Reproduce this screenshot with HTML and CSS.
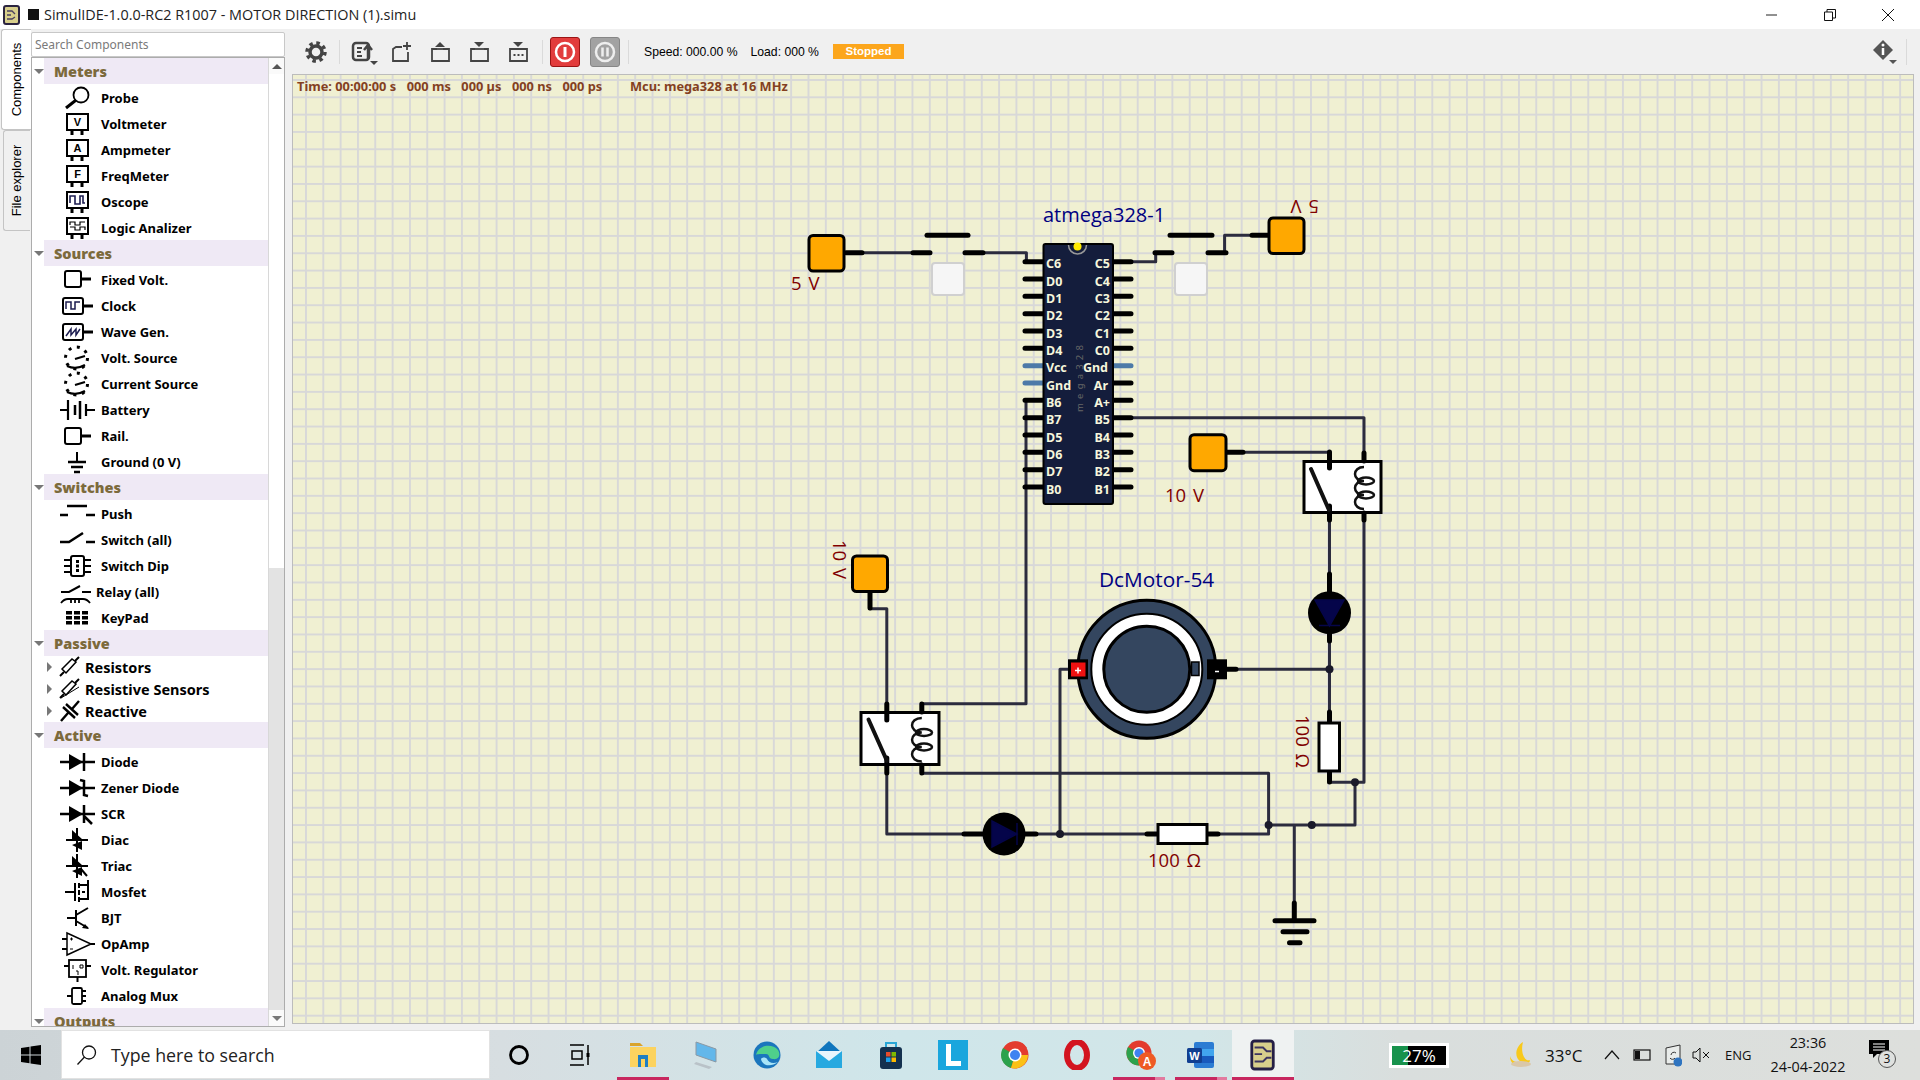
FILE: index.html
```html
<!DOCTYPE html>
<html lang="en">
<head>
    <meta charset="UTF-8">
    <title>SimulIDE-1.0.0-RC2 R1007 - MOTOR DIRECTION (1).simu</title>
    <link rel="stylesheet" href="styles.css">
</head>
<body>
    <div class="titlebar">
        <svg class="app-icon" viewBox="0 0 18 20"><rect x="1" y="1" width="15" height="18" rx="2" fill="#d8cf8c" stroke="#2b2440" stroke-width="2"/><path d="M4 6h5l3 3M4 10h4M4 14h5l3-2" fill="none" stroke="#4a4060" stroke-width="1.3"/></svg>
        <span class="title-mark"></span>
        <span class="title-text">SimulIDE-1.0.0-RC2 R1007 - MOTOR DIRECTION (1).simu</span>
        <div class="win-buttons">
            <svg viewBox="0 0 12 12"><path d="M0 6h11" stroke="#222"/></svg>
            <svg viewBox="0 0 12 12"><path d="M.5 3h8v8.500h-8zM3 3V.5h8.500V9H9" fill="none" stroke="#111"/></svg>
            <svg viewBox="0 0 12 12"><path d="M0 0l12 12M12 0L0 12" stroke="#111"/></svg>
        </div>
    </div>

    <div class="main">
        <div class="tabs">
            <div class="tab tab-active"><span>Components</span></div>
            <div class="tab"><span>File explorer</span></div>
        </div>

        <div class="side">
            <input class="search" type="text" placeholder="Search Components">
            <div class="tree">
                <div class="list">
                    <div class="group"><i class="tri-down"></i><b>Meters</b></div>
                    <div class="item"><svg class="ico" viewBox="0 0 36 26"><circle cx="21" cy="10" r="7.500" fill="none" stroke="#000" stroke-width="1.800"/><path d="M15.500 15.500L6 23" stroke="#000" stroke-width="3"/></svg>Probe</div>
                    <div class="item"><svg class="ico" viewBox="0 0 36 26"><rect x="7" y="3" width="21" height="16" fill="#fff" stroke="#000" stroke-width="2"/><path d="M12 19v5M22 19v5" stroke="#000" stroke-width="3"/><text x="17.500" y="15" class="ico-letter">V</text></svg>Voltmeter</div>
                    <div class="item"><svg class="ico" viewBox="0 0 36 26"><rect x="7" y="3" width="21" height="16" fill="#fff" stroke="#000" stroke-width="2"/><path d="M12 19v5M22 19v5" stroke="#000" stroke-width="3"/><text x="17.500" y="15" class="ico-letter">A</text></svg>Ampmeter</div>
                    <div class="item"><svg class="ico" viewBox="0 0 36 26"><rect x="7" y="3" width="21" height="16" fill="#fff" stroke="#000" stroke-width="2"/><path d="M12 19v5M22 19v5" stroke="#000" stroke-width="3"/><text x="17.500" y="15" class="ico-letter">F</text></svg>FreqMeter</div>
                    <div class="item"><svg class="ico" viewBox="0 0 36 26"><rect x="7" y="3" width="21" height="16" fill="#fff" stroke="#000" stroke-width="2"/><path d="M12 19v5M22 19v5" stroke="#000" stroke-width="3"/><path d="M10 14V7h5v8h5V7h3v7h2" fill="none" stroke="#1c1c50" stroke-width="1.600"/></svg>Oscope</div>
                    <div class="item"><svg class="ico" viewBox="0 0 36 26"><rect x="7" y="3" width="21" height="16" fill="#fff" stroke="#000" stroke-width="2"/><path d="M12 19v5M22 19v5" stroke="#000" stroke-width="3"/><path d="M10 10V7h5v3h5V7h5M10 12h5v3h5v-3h5v3" fill="none" stroke="#000" stroke-width="1.200"/></svg>Logic Analizer</div>

                    <div class="group"><i class="tri-down"></i><b>Sources</b></div>
                    <div class="item"><svg class="ico" viewBox="0 0 36 26"><rect x="5" y="4" width="16" height="16" rx="2" fill="#fff" stroke="#000" stroke-width="2"/><path d="M21 12h10" stroke="#000" stroke-width="3"/></svg>Fixed Volt.</div>
                    <div class="item"><svg class="ico" viewBox="0 0 36 26"><rect x="3" y="5" width="20" height="16" rx="2" fill="#fff" stroke="#000" stroke-width="2"/><path d="M23 13h10" stroke="#000" stroke-width="3"/><path d="M6 16V9h5v7h4V9h5" fill="none" stroke="#1c1c50" stroke-width="1.500"/></svg>Clock</div>
                    <div class="item"><svg class="ico" viewBox="0 0 36 26"><rect x="3" y="5" width="20" height="16" rx="2" fill="#fff" stroke="#000" stroke-width="2"/><path d="M23 13h10" stroke="#000" stroke-width="3"/><path d="M6 17l5-7v6l5-6v6l4-6" fill="none" stroke="#1c1c50" stroke-width="1.500"/></svg>Wave Gen.</div>
                    <div class="item"><svg class="ico" viewBox="0 0 36 26"><circle cx="16.500" cy="13" r="11" fill="none" stroke="#000" stroke-width="3" stroke-dasharray="3 5.640"/><path d="M7 21q9 4 18-1M15 14l10-3" fill="none" stroke="#000" stroke-width="2.200"/></svg>Volt. Source</div>
                    <div class="item"><svg class="ico" viewBox="0 0 36 26"><circle cx="16.500" cy="13" r="11" fill="none" stroke="#000" stroke-width="3" stroke-dasharray="3 5.640"/><path d="M7 21q9 4 18-1M15 14l10-3" fill="none" stroke="#000" stroke-width="2.200"/></svg>Current Source</div>
                    <div class="item"><svg class="ico" viewBox="0 0 36 26"><path d="M0 13h8M8 3v20M26 13h9M26 7v12" stroke="#000" stroke-width="2.200" fill="none"/><path d="M15 8v10M20 4v18" stroke="#000" stroke-width="2.500"/></svg>Battery</div>
                    <div class="item"><svg class="ico" viewBox="0 0 36 26"><rect x="5" y="5" width="16" height="16" rx="2" fill="#fff" stroke="#000" stroke-width="2"/><path d="M21 13h10" stroke="#000" stroke-width="3"/></svg>Rail.</div>
                    <div class="item"><svg class="ico" viewBox="0 0 36 26"><path d="M17 3v10" stroke="#000" stroke-width="2"/><path d="M8 13h18M11 18h12M14 23h6" stroke="#000" stroke-width="2.600"/></svg>Ground (0 V)</div>

                    <div class="group"><i class="tri-down"></i><b>Switches</b></div>
                    <div class="item"><svg class="ico" viewBox="0 0 36 26"><path d="M7 5h20" stroke="#000" stroke-width="2.500"/><path d="M0 14h8M26 14h9" stroke="#000" stroke-width="2.500"/></svg>Push</div>
                    <div class="item"><svg class="ico" viewBox="0 0 36 26"><path d="M0 15h9L23 6" fill="none" stroke="#000" stroke-width="2.500"/><path d="M26 15h9" stroke="#000" stroke-width="2.500"/></svg>Switch (all)</div>
                    <div class="item"><svg class="ico" viewBox="0 0 36 26"><rect x="11" y="3" width="13" height="20" rx="2" fill="#fff" stroke="#000" stroke-width="2"/><path d="M4 7h7M4 13h7M4 19h7M24 7h7M24 13h7M24 19h7" stroke="#000" stroke-width="2"/><path d="M17.500 7v12" stroke="#000" stroke-width="3" stroke-dasharray="3 1.500"/></svg>Switch Dip</div>
                    <div class="item item-relay"><svg class="ico" viewBox="0 0 31 26"><path d="M1 13h8L20 7M22 13h9" fill="none" stroke="#000" stroke-width="2"/><path d="M1 24q3-4 7-4h15q4 0 7 4M11 20v4M15 20v4M19 20v4" fill="none" stroke="#000" stroke-width="1.800"/></svg>Relay (all)</div>
                    <div class="item"><svg class="ico" viewBox="0 0 36 26"><path d="M6 6h6v3.500H6zM14 6h6v3.500h-6zM22 6h6v3.500h-6zM6 11h6v3.500H6zM14 11h6v3.500h-6zM22 11h6v3.500h-6zM6 16h6v3.500H6zM14 16h6v3.500h-6zM22 16h6v3.500h-6z"/></svg>KeyPad</div>

                    <div class="group"><i class="tri-down"></i><b>Passive</b></div>
                    <div class="sub"><i class="tri-right"></i><svg class="ico-sub" viewBox="0 0 21 22"><path d="M1 20l4-4M16 5l4-4" stroke="#000" stroke-width="2"/><path d="M3 13L13 3l4 3L7 17z" fill="#fff" stroke="#000" stroke-width="1.500"/></svg>Resistors</div>
                    <div class="sub"><i class="tri-right"></i><svg class="ico-sub" viewBox="0 0 21 22"><path d="M1 20l4-4M16 5l4-4" stroke="#000" stroke-width="2"/><path d="M3 13L13 3l4 3L7 17z" fill="#fff" stroke="#000" stroke-width="1.500"/><path d="M2 20L20 9" stroke="#000"/></svg>Resistive Sensors</div>
                    <div class="sub"><i class="tri-right"></i><svg class="ico-sub" viewBox="0 0 21 22"><path d="M2 21l7-8M13 9l7-8M4 7l12 11M7 4l12 11" stroke="#000" stroke-width="2.400"/></svg>Reactive</div>

                    <div class="group"><i class="tri-down"></i><b>Active</b></div>
                    <div class="item"><svg class="ico" viewBox="0 0 36 26"><path d="M0 13h35" stroke="#000" stroke-width="2.500"/><path d="M9 5l14 8-14 8z"/><path d="M24 4v18" stroke="#000" stroke-width="2.500"/></svg>Diode</div>
                    <div class="item"><svg class="ico" viewBox="0 0 36 26"><path d="M0 13h35" stroke="#000" stroke-width="2.500"/><path d="M9 5l14 8-14 8z"/><path d="M20 5l4 1v14l4 1" fill="none" stroke="#000" stroke-width="2.500"/></svg>Zener Diode</div>
                    <div class="item"><svg class="ico" viewBox="0 0 36 26"><path d="M0 13h35" stroke="#000" stroke-width="2.500"/><path d="M9 5l14 8-14 8z"/><path d="M24 4v18M24 15l8 8" fill="none" stroke="#000" stroke-width="2.500"/></svg>SCR</div>
                    <div class="item"><svg class="ico" viewBox="0 0 36 26"><path d="M6 13h22M17 1v24" stroke="#000" stroke-width="2"/><path d="M12 3l10 9H12zM22 14v9l-10-5z"/></svg>Diac</div>
                    <div class="item"><svg class="ico" viewBox="0 0 36 26"><path d="M6 13h22M17 1v24M21 16l6 7" stroke="#000" stroke-width="2"/><path d="M12 3l10 9H12zM22 14v9l-10-5z"/></svg>Triac</div>
                    <div class="item"><svg class="ico" viewBox="0 0 36 26"><path d="M5 13h10M15 4v18M19 4v5M19 11v5M19 18v5M19 6h9v14h-9" fill="none" stroke="#000" stroke-width="2"/><path d="M28 1v4M22 13h3" stroke="#000" stroke-width="2"/></svg>Mosfet</div>
                    <div class="item"><svg class="ico" viewBox="0 0 36 26"><path d="M7 13h9M16 5v16M16 10l12-7M16 16l12 7" fill="none" stroke="#000" stroke-width="2"/><path d="M29 24l-7-1 3-4z"/></svg>BJT</div>
                    <div class="item"><svg class="ico" viewBox="0 0 36 26"><path d="M7 2l24 11L7 24z" fill="#fff" stroke="#000" stroke-width="1.500"/><path d="M2 8h5M2 18h5M31 13h4" stroke="#000" stroke-width="1.800"/><path d="M10 8h3M11.500 6.500v3M10 18h3" stroke="#000"/></svg>OpAmp</div>
                    <div class="item"><svg class="ico" viewBox="0 0 36 26"><rect x="9" y="3" width="17" height="17" fill="#fff" stroke="#000" stroke-width="1.800"/><path d="M4 9h5M26 9h5M17.500 20v5" stroke="#000" stroke-width="2"/><path d="M13 8v4M20 8h3v3h-3zM16 14h2v4" stroke="#000" fill="none"/></svg>Volt. Regulator</div>
                    <div class="item"><svg class="ico" viewBox="0 0 36 26"><rect x="12" y="5" width="10" height="16" rx="1.500" fill="#fff" stroke="#000" stroke-width="1.800"/><path d="M7 13h5M22 8h4M22 13h4M22 18h4" stroke="#000" stroke-width="2"/></svg>Analog Mux</div>

                    <div class="group"><i class="tri-down"></i><b>Outputs</b></div>
                </div>
                <div class="scrollbar">
                    <div class="scroll-btn"><i class="tri-up"></i></div>
                    <div class="scroll-thumb"></div>
                    <div class="scroll-track"></div>
                    <div class="scroll-btn"><i class="tri-down"></i></div>
                </div>
            </div>
        </div>

        <div class="work">
            <div class="toolbar">
                <div class="tool"><svg viewBox="0 0 24 24" width="24" height="24"><circle cx="12" cy="12" r="6" fill="none" stroke="#444" stroke-width="3.500"/><circle cx="12" cy="12" r="9" fill="none" stroke="#444" stroke-width="3.500" stroke-dasharray="3.500 3.570"/></svg></div>
                <div class="tool-sep sep-a"></div>
                <div class="tool"><svg viewBox="0 0 38 30" width="38" height="30"><rect x="10" y="6" width="16" height="17" rx="3" fill="none" stroke="#444" stroke-width="2.500"/><path d="M14 11h5M14 15h4M14 19h5" stroke="#444" stroke-width="2"/><path d="M25 22v-12M21 13l4-5 4 5" fill="none" stroke="#444" stroke-width="2.500"/><path d="M27 24h8l-4 4z" fill="#444"/></svg></div>
                <div class="tool"><svg viewBox="0 0 24 24" width="24" height="24"><path d="M13 7H7L4 9v12h15v-9" fill="none" stroke="#444" stroke-width="1.800"/><path d="M18 2v8M14 6h8" stroke="#444" stroke-width="1.800"/></svg></div>
                <div class="tool"><svg viewBox="0 0 24 24" width="24" height="24"><path d="M9 9H4v12h17V9h-6" fill="none" stroke="#444" stroke-width="1.800"/><path d="M12 2l5 5H7z" fill="#444"/><path d="M9 9h6" stroke="#444" stroke-width="1.800"/></svg></div>
                <div class="tool"><svg viewBox="0 0 24 24" width="24" height="24"><path d="M8 9H4v12h17V9h-4" fill="none" stroke="#444" stroke-width="1.800"/><path d="M7 2h10l-5 5z" fill="#444"/><path d="M8 9h9" stroke="#444" stroke-width="1.800"/></svg></div>
                <div class="tool"><svg viewBox="0 0 24 24" width="24" height="24"><path d="M8 9H4v12h17V9h-4" fill="none" stroke="#444" stroke-width="1.800"/><path d="M7 2h10l-5 5z" fill="#444"/><path d="M8 9h9M7.500 15h2M11.500 15h2M15.500 15h2" stroke="#444" stroke-width="1.800"/></svg></div>
                <div class="tool-sep sep-b"></div>
                <div class="sim-btn sim-power"><svg viewBox="0 0 24 24" width="24" height="24"><circle cx="12" cy="12" r="9" fill="none" stroke="#fff" stroke-width="2.500"/><path d="M12 7v10" stroke="#fff" stroke-width="3"/></svg></div>
                <div class="sim-btn sim-pause"><svg viewBox="0 0 24 24" width="24" height="24"><circle cx="12" cy="12" r="9" fill="none" stroke="#eee" stroke-width="2.500"/><path d="M9.500 7.500v9M14.500 7.500v9" stroke="#eee" stroke-width="2.500"/></svg></div>
                <div class="tool-sep sep-c"></div>
                <span class="meter">Speed: 000.00 %</span>
                <span class="meter meter-load">Load: 000 %</span>
                <span class="stopped">Stopped</span>
                <div class="info-btn">
                    <svg viewBox="0 0 26 26" width="26" height="26"><path d="M11 1l10 10-10 10L1 11z" fill="#555"/><circle cx="11" cy="6" r="1.500" fill="#fff"/><path d="M11 9v7" stroke="#fff" stroke-width="2.500"/><path d="M17 21h8l-4 4z" fill="#555"/></svg>
                </div>
            </div>

            <div class="canvas">
                <svg class="circuit" viewBox="293 75 1620 948">
                    <!-- wires first, pins and parts go on top -->
                    <g class="wire">
                        <path d="M862 252.700H912M984 252.700H1026.400V261.700"/>
                        <path d="M1130 261.700H1155.700V252.700M1224.600 252.700V235.300H1252"/>
                        <path d="M1026 400V703.700H922"/>
                        <path d="M1130 417.700H1364V782.300H1329V770"/>
                        <path d="M1243 452.300H1329.500V465"/>
                        <path d="M1329.500 510V575M1329.500 640V712"/>
                        <path d="M870 608.700H886.800V704"/>
                        <path d="M886.800 770V834H964M1036 834H1148M1217 834H1268.600V773.300H922"/>
                        <path d="M1060 834V669.300H1068M1226 669.300H1329.500"/>
                        <path d="M1268.600 825H1355V782.300M1294.300 825V905"/>
                    </g>

                    <!-- 5 V source left -->
                    <path class="pin" d="M846 252.700H862M913 252.700H930M965 252.700H983"/>
                    <rect class="source" x="809" y="235.500" width="35" height="35.500" rx="4"/>
                    <path class="pin" d="M927 235.300H968"/>
                    <rect class="push-btn" x="932" y="263" width="32" height="32" rx="3"/>
                    <text class="val" x="791" y="290">5 V</text>

                    <!-- 5 V source right -->
                    <path class="pin" d="M1155 252.700H1172M1208 252.700H1226M1252 235.300H1268M1170 235.300H1212"/>
                    <rect class="source" x="1269" y="218" width="35" height="35.500" rx="4"/>
                    <rect class="push-btn" x="1175" y="263" width="32" height="32" rx="3"/>
                    <text class="val" transform="rotate(180 1305 206)" x="1291" y="212">5 V</text>

                    <!-- atmega328 -->
                    <text class="name" x="1043" y="222">atmega328-1</text>
                    <path class="pin" d="M1025 261.700H1043M1025 279H1043M1025 296.300H1043M1025 313.700H1043M1025 331H1043M1025 348.300H1043M1025 400.300H1043M1025 417.700H1043M1025 435H1043M1025 452.300H1043M1025 469.700H1043M1025 487H1043"/>
                    <path class="pin" d="M1113 261.700H1131M1113 279H1131M1113 296.300H1131M1113 313.700H1131M1113 331H1131M1113 348.300H1131M1113 383H1131M1113 400.300H1131M1113 417.700H1131M1113 435H1131M1113 452.300H1131M1113 469.700H1131M1113 487H1131"/>
                    <path class="pin pin-power" d="M1025 365.700H1043M1025 383H1043M1113 365.700H1131"/>
                    <rect class="chip" x="1043.500" y="244" width="69.500" height="260" rx="2"/>
                    <path d="M1068.500 245a9 9 0 0 0 18 0" fill="none" stroke="#999" stroke-width="1.500"/>
                    <circle cx="1077.500" cy="246.500" r="4" fill="#ffea00"/>
                    <g class="chip-left">
                        <text x="1046" y="268">C6</text><text x="1046" y="286">D0</text><text x="1046" y="303">D1</text><text x="1046" y="320">D2</text><text x="1046" y="338">D3</text><text x="1046" y="355">D4</text><text x="1046" y="372">Vcc</text><text x="1046" y="390">Gnd</text><text x="1046" y="407">B6</text><text x="1046" y="424">B7</text><text x="1046" y="442">D5</text><text x="1046" y="459">D6</text><text x="1046" y="476">D7</text><text x="1046" y="494">B0</text>
                    </g>
                    <g class="chip-right">
                        <text x="1110" y="268">C5</text><text x="1110" y="286">C4</text><text x="1110" y="303">C3</text><text x="1110" y="320">C2</text><text x="1110" y="338">C1</text><text x="1110" y="355">C0</text><text x="1108" y="372">Gnd</text><text x="1108" y="390">Ar</text><text x="1110" y="407">A+</text><text x="1110" y="424">B5</text><text x="1110" y="442">B4</text><text x="1110" y="459">B3</text><text x="1110" y="476">B2</text><text x="1110" y="494">B1</text>
                    </g>
                    <text class="chip-type" transform="rotate(-90 1083 412)" x="1083" y="412">mega328</text>

                    <!-- 10 V sources -->
                    <path class="pin" d="M1227 452.300H1243"/>
                    <rect class="source" x="1190" y="434.700" width="36" height="36" rx="4"/>
                    <text class="val" x="1165" y="501.700">10 V</text>
                    <path class="pin" d="M870 593V608"/>
                    <rect class="source" x="852.500" y="556" width="35" height="35.500" rx="4"/>
                    <text class="val" transform="rotate(90 833 540)" x="833" y="540">10 V</text>

                    <!-- relay, right -->
                    <rect class="part" x="1304" y="461.500" width="77" height="51"/>
                    <path class="pin" d="M1329.500 452V468M1329.500 506V520M1364 453V461M1364 513V520"/>
                    <path class="relay-arm" d="M1311 469L1329 510"/>
                    <path class="coil" d="M1364 467c-12 0-12 14 0 14c-12 0-12 14 0 14c-12 0-12 14 0 14"/>
                    <ellipse class="coil" cx="1366" cy="481" rx="8" ry="3.500"/>
                    <ellipse class="coil" cx="1366" cy="495" rx="8" ry="3.500"/>

                    <!-- relay, left -->
                    <rect class="part" x="861" y="712.500" width="78" height="52"/>
                    <path class="pin" d="M886.800 704V720M886.800 758V773M921.800 704V712M921.800 765V773"/>
                    <path class="relay-arm" d="M868.500 719.500L887 761"/>
                    <path class="coil" d="M921.800 718c-13 0-13 14.500 0 14.500c-13 0-13 14.500 0 14.500c-13 0-13 14.500 0 14.500"/>
                    <ellipse class="coil" cx="924" cy="732.500" rx="8" ry="3.500"/>
                    <ellipse class="coil" cx="924" cy="747" rx="8" ry="3.500"/>

                    <!-- motor -->
                    <text class="name name-wide" x="1099" y="586.500">DcMotor-54</text>
                    <circle class="motor" cx="1146.800" cy="669.300" r="69"/>
                    <circle cx="1146.800" cy="669.300" r="55.500" fill="#fff" stroke="#000" stroke-width="2"/>
                    <rect class="motor-tab" x="1191.500" y="662" width="7.500" height="13.500"/>
                    <circle class="motor" cx="1146.800" cy="669.300" r="43"/>
                    <rect x="1068" y="659.300" width="20" height="20" fill="#000"/>
                    <rect x="1071" y="662.500" width="14.500" height="14" fill="#ee1111"/>
                    <path d="M1075 670.500h6M1078 667.500v6" stroke="#fff" stroke-width="1.500"/>
                    <rect x="1207" y="659.300" width="20" height="20" fill="#000"/>
                    <path d="M1215 671.500h4" stroke="#fff" stroke-width="1.500"/>
                    <path class="pin" d="M1226 669.300H1236"/>

                    <!-- leds -->
                    <path class="pin" d="M1329.500 574V594M1329.500 630V641M964 834H984M1024 834H1036"/>
                    <ellipse cx="1329.500" cy="612.700" rx="21.500" ry="21.500" fill="#000"/>
                    <path class="led-mark" d="M1315 600h29l-14.500 26zM1319 625.500h21"/>
                    <ellipse cx="1004" cy="834" rx="21.500" ry="21.500" fill="#000"/>
                    <path class="led-mark" d="M992 821v26l25-13zM1017 823v22"/>

                    <!-- resistors -->
                    <path class="pin" d="M1147 834H1158M1207 834H1218"/>
                    <rect class="part" x="1158" y="824.500" width="49" height="19"/>
                    <text class="val" x="1148" y="866.500">100 Ω</text>
                    <path class="pin" d="M1329.500 712V723M1329.500 771V782"/>
                    <rect class="part" x="1319" y="723" width="20.500" height="48"/>
                    <text class="val" transform="rotate(90 1296 715)" x="1296" y="715">100 Ω</text>

                    <!-- ground -->
                    <path class="pin" d="M1294.300 903V920M1275 920.700H1314M1283 931.700H1307M1289.500 942.700H1300"/>

                    <!-- junctions -->
                    <g class="dot">
                        <circle cx="1060" cy="834" r="4"/><circle cx="1268.600" cy="825" r="4"/><circle cx="1311.800" cy="825" r="4"/><circle cx="1355" cy="782.300" r="4"/><circle cx="1329.500" cy="669.300" r="4"/>
                    </g>
                </svg>
                <div class="status">
                    <span>Time: 00:00:00 s</span><span>000 ms</span><span>000 µs</span><span>000 ns</span><span>000 ps</span>
                    <span class="status-mcu">Mcu: mega328 at 16 MHz</span>
                </div>
            </div>
        </div>
    </div>

    <div class="taskbar">
        <div class="start"><svg viewBox="0 0 20 20" width="20" height="20"><path d="M0 3l8.500-1.300V9.500H0zM9.500 1.500L20 0v9.500H9.500zM0 10.500h8.500v7.800L0 17zM9.500 10.500H20V20L9.500 18.500z" fill="#000"/></svg></div>
        <div class="tb-search">
            <svg viewBox="0 0 22 22" width="22" height="22"><circle cx="13" cy="8.500" r="6.500" fill="none" stroke="#111" stroke-width="1.300"/><path d="M8.500 13L1.500 20.500" stroke="#111" stroke-width="1.300"/></svg>
            <span>Type here to search</span>
        </div>
        <div class="tb-apps">
            <div class="tb-app"><svg viewBox="0 0 24 24" width="24" height="24"><circle cx="12" cy="12" r="8.500" fill="none" stroke="#000" stroke-width="2.800"/></svg></div>
            <div class="tb-app"><svg viewBox="0 0 24 24" width="24" height="24"><path d="M1 2h14M1 22h14M3 8h10v8H3zM19 2v20" fill="none" stroke="#000" stroke-width="1.500"/><path d="M19 10v4" stroke="#000" stroke-width="3"/></svg></div>
            <div class="tb-app tb-open"><svg viewBox="0 0 30 30" width="30" height="30"><path d="M2 3h10l3 3H2z" fill="#d9a32c"/><path d="M2 7h26v20H2z" fill="#fcd35f"/><path d="M10 27V15h10v12h-3v-8h-4v8z" fill="#1f7fc4"/></svg></div>
            <div class="tb-app"><svg viewBox="0 0 30 30" width="30" height="30"><path d="M6 2l20 7v13L6 15z" fill="#63b7ea" stroke="#8a99a5"/><path d="M6 22l16 5-3 2-15-5z" fill="#b9c2c8"/></svg></div>
            <div class="tb-app"><svg viewBox="0 0 30 30" width="30" height="30"><circle cx="15" cy="15" r="13.500" fill="#1b76bd"/><path d="M4 15C6 5 20 3 26 10c3 5 1 10-5 9-5 0-3-5-7-5-4 0-10 0-10 1z" fill="#4fd08b"/><path d="M9 19c1 6 9 9 17 3-5 2-9 1-11-3-1-2-5-2-6 0z" fill="#a8e4f7"/></svg></div>
            <div class="tb-app"><svg viewBox="0 0 30 30" width="30" height="30"><path d="M15 1l13 12H2z" fill="#0f75bd"/><path d="M2 11h26v17H2z" fill="#27a9e0"/><path d="M2 11l13 10 13-10H2z" fill="#e9f5fc"/></svg></div>
            <div class="tb-app"><svg viewBox="0 0 30 30" width="30" height="30"><path d="M10 8V3h10v5" fill="none" stroke="#2aa6d6" stroke-width="2"/><rect x="4" y="7" width="22" height="22" rx="3" fill="#14314f"/><path d="M10 12h4.500v4.500H10z" fill="#e74c2b"/><path d="M15.500 12H20v4.500h-4.500z" fill="#7fba00"/><path d="M10 17.500h4.500V22H10z" fill="#1d9fe8"/><path d="M15.500 17.500H20V22h-4.500z" fill="#fdb900"/></svg></div>
            <div class="tb-app"><svg viewBox="0 0 32 32" width="32" height="32"><rect x="1" y="1" width="30" height="30" fill="#1aa6dd"/><path d="M9 5h5v17h10v5H9z" fill="#fff"/></svg></div>
            <div class="tb-app"><svg viewBox="0 0 30 30" width="30" height="30"><circle cx="15" cy="15" r="13.500" fill="#e33b2e"/><path d="M15 15L27 8a13.500 13.500 0 0 0-23.500 0z" fill="#e33b2e"/><path d="M15 15L3 8a13.500 13.500 0 0 0 8 20z" fill="#2ba24c"/><path d="M15 15h13a13.500 13.500 0 0 1-17 13z" fill="#fbc116"/><circle cx="15" cy="15" r="6.500" fill="#fff"/><circle cx="15" cy="15" r="5" fill="#3e82f1"/></svg></div>
            <div class="tb-app"><svg viewBox="0 0 30 30" width="30" height="30"><ellipse cx="15" cy="15" rx="10" ry="13" fill="none" stroke="#d3141f" stroke-width="6"/></svg></div>
            <div class="tb-app tb-open tb-two tb-nudge"><svg viewBox="0 0 32 32" width="32" height="32"><circle cx="13" cy="14" r="12.500" fill="#e33b2e"/><path d="M13 14L2 20a12.500 12.500 0 0 0 11 6.500z" fill="#2ba24c"/><path d="M13 14l-11-6a12.500 12.500 0 0 0 0 12z" fill="#2ba24c"/><circle cx="13" cy="14" r="6" fill="#fff"/><circle cx="13" cy="14" r="4.600" fill="#3e82f1"/><circle cx="21" cy="22" r="9" fill="#ee5a24"/><text x="21" y="26.500" class="tb-a">A</text></svg></div>
            <div class="tb-app tb-open tb-two"><svg viewBox="0 0 30 30" width="30" height="30"><rect x="8" y="2" width="20" height="26" rx="2" fill="#2b7cd3"/><path d="M8 9h20v7H8z" fill="#41a5ee"/><path d="M8 16h20v7H8z" fill="#185abd"/><rect x="1" y="8" width="15" height="15" rx="1.500" fill="#103f91"/><text x="8.500" y="20" class="tb-w">W</text></svg></div>
            <div class="tb-app tb-open tb-current"><svg viewBox="0 0 30 34" width="28" height="32"><rect x="3" y="2" width="23" height="30" rx="3" fill="#d8cf8c" stroke="#241f45" stroke-width="3"/><path d="M6 9h9l4 4h5M6 16h8M6 24h9l4-4h5" fill="none" stroke="#3c3560" stroke-width="2"/></svg></div>
        </div>

        <div class="tray">
            <div class="tray-battery"><span>27%</span></div>
            <svg class="tray-weather" viewBox="0 0 26 28" width="26" height="28"><path d="M16 1C8 6 7 17 14 21 8 22 4 19 3 15c0 8 6 11 12 10 5-1 8-3 8-6-5 2-10-7-7-18z" fill="#f8c91c"/><ellipse cx="14" cy="23" rx="10" ry="3" fill="#d9c7aa"/></svg>
            <span class="tray-temp">33°C</span>
            <svg class="tray-chev" viewBox="0 0 16 16" width="16" height="16"><path d="M1 12l7-8 7 8" fill="none" stroke="#111" stroke-width="1.200"/></svg>
            <svg class="tray-icon tray-bat" viewBox="0 0 18 18" width="18" height="18"><rect x="1" y="4" width="16" height="10" fill="none" stroke="#111" stroke-width="1.200"/><rect x="2" y="5" width="5" height="8" fill="#111"/></svg>
            <svg class="tray-icon tray-net" viewBox="0 0 18 24" width="18" height="24"><path d="M2 5l14-3v19H2z" fill="#e9ecea" stroke="#333"/><path d="M7 12a3 3 0 0 1 5-2M11 15a3 3 0 0 1-5 0" fill="none" stroke="#333"/><circle cx="14" cy="19" r="4.500" fill="#2e74c0"/></svg>
            <svg class="tray-icon tray-vol" viewBox="0 0 18 18" width="18" height="18"><path d="M1 6h3l4-4v14l-4-4H1z" fill="none" stroke="#111"/><path d="M11 6l6 6M17 6l-6 6" stroke="#111"/></svg>
            <span class="tray-lang">ENG</span>
            <div class="tray-clock"><span>23:36</span><span>24-04-2022</span></div>
            <div class="tray-notif">
                <svg viewBox="0 0 20 18" width="20" height="18"><path d="M0 0h20v14H8l-4 4v-4H0z" fill="#000"/><path d="M4 4h12M4 7h12M4 10h12" stroke="#fff"/></svg>
                <span class="notif-badge">3</span>
            </div>
        </div>
    </div>
</body>
</html>
```

FILE: styles.css
```css
* {
    box-sizing: border-box;
}
html, body {
    height: 100%;
}
body {
    margin: 0;
    display: flex;
    flex-direction: column;
    height: 100vh;
    overflow: hidden;
    background: #f0f0f0;
    font-family: "Noto Sans", sans-serif;
    color: #000;
}

/* title bar */
.titlebar {
    height: 29px;
    flex: none;
    display: flex;
    align-items: center;
    background: #fff;
}
.app-icon {
    width: 18px;
    height: 20px;
    margin-left: 3px;
}
.title-mark {
    width: 11px;
    height: 11px;
    margin-left: 7px;
    background: #111;
}
.title-text {
    margin-left: 5px;
    font-family: "Open Sans", sans-serif;
    font-size: 14.400px;
    color: #222;
}
.win-buttons {
    margin-left: auto;
    display: flex;
    gap: 46px;
    padding-right: 26px;
}
.win-buttons svg {
    width: 12px;
    height: 12px;
}

.main {
    flex: 1;
    display: flex;
    min-height: 0;
}

/* left tabs */
.tabs {
    width: 31px;
    flex: none;
    padding-top: 0;
}
.tab {
    width: 27px;
    height: 101px;
    margin-left: 3px;
    display: flex;
    align-items: center;
    justify-content: center;
    background: #f0f0f0;
    border: 1px solid #c4c4c4;
    border-right: 0;
    border-radius: 3px 0 0 3px;
}
.tab span {
    transform: rotate(-90deg);
    white-space: nowrap;
    font-family: "Liberation Sans", sans-serif;
    font-size: 13px;
}
.tab-active {
    width: 30px;
    margin-left: 1px;
    background: #fff;
}

/* component panel */
.side {
    width: 254px;
    flex: none;
    display: flex;
    flex-direction: column;
    padding-bottom: 3px;
}
.search {
    height: 25px;
    margin-top: 3px;
    padding: 0 3px;
    flex: none;
    border: 1px solid #c8c8c8;
    border-radius: 2px;
    background: #fff;
    font-family: "Noto Sans", sans-serif;
    font-size: 12px;
    outline: none;
}
.search::placeholder {
    color: #7a7a7a;
}
.tree {
    flex: 1;
    min-height: 0;
    display: flex;
    background: #fff;
    border: 1px solid #acacac;
}
.list {
    flex: 1;
    overflow: hidden;
    font-size: 13px;
    font-weight: 700;
}
.group {
    height: 26px;
    display: flex;
    align-items: center;
}
.group b {
    flex: 1;
    height: 26px;
    padding-left: 10px;
    background: #efe9f5;
    color: #7c6a3c;
    font-size: 14.500px;
    line-height: 27px;
}
.item {
    height: 26px;
    display: flex;
    align-items: center;
    padding-top: 1px;
    padding-left: 28px;
}
.ico {
    width: 36px;
    height: 26px;
    margin-right: 5px;
    flex: none;
}
.item-relay .ico {
    width: 31px;
}
.ico-letter {
    font-family: "Liberation Sans", sans-serif;
    font-size: 11px;
    font-weight: 700;
    text-anchor: middle;
}
.sub {
    height: 22px;
    display: flex;
    align-items: center;
    padding-left: 15px;
    font-size: 14.500px;
}
.ico-sub {
    width: 21px;
    height: 22px;
    margin: 0 5px 0 7px;
    flex: none;
}
.tri-down, .tri-up, .tri-right {
    display: block;
    width: 0;
    height: 0;
    border-style: solid;
    border-color: transparent;
}
.tri-down {
    margin-left: 2px;
    margin-right: 0;
    border-width: 5px 5px 0;
    border-top-color: #777;
}
.tri-up {
    border-width: 0 5px 5px;
    border-bottom-color: #555;
}
.tri-right {
    border-width: 5px 0 5px 5px;
    border-left-color: #777;
}
.scrollbar {
    width: 16px;
    flex: none;
    display: flex;
    flex-direction: column;
    background: #fff;
    border-left: 1px solid #d8d8d8;
}
.scroll-btn {
    height: 16px;
    flex: none;
    display: flex;
    align-items: center;
    justify-content: center;
    background: #fafafa;
}
.scroll-btn .tri-down {
    margin: 0;
}
.scroll-thumb {
    height: 494px;
    flex: none;
    background: #fff;
}
.scroll-track {
    flex: 1;
    background: #e3e3e3;
}

/* toolbar */
.work {
    flex: 1;
    min-width: 0;
    display: flex;
    flex-direction: column;
}
.toolbar {
    height: 45px;
    flex: none;
    display: flex;
    align-items: center;
    padding-left: 11.500px;
}
.tool {
    width: 39px;
    flex: none;
    display: flex;
    justify-content: center;
}
.tool-sep {
    width: 1px;
    height: 24px;
    flex: none;
    background: #dadada;
}
.sep-a {
    margin: 0 3px;
}
.sep-b {
    margin: 0 7.500px 0 4px;
}
.sep-c {
    margin: 0 15px 0 8px;
}
.sim-btn {
    width: 30px;
    height: 30px;
    flex: none;
    display: flex;
    align-items: center;
    justify-content: center;
    border-radius: 3px;
}
.sim-power {
    background: #e23c3c;
    border: 1px solid #9a1414;
}
.sim-pause {
    margin-left: 10px;
    background: #a2a2a2;
    border: 1px solid #868686;
}
.meter {
    font-family: "Liberation Sans", sans-serif;
    font-size: 12.200px;
    white-space: nowrap;
}
.meter-load {
    margin-left: 13px;
}
.stopped {
    width: 71px;
    height: 15px;
    margin-left: 14px;
    background: #fca61c;
    color: #fff;
    font-family: "Liberation Sans", sans-serif;
    font-size: 11.500px;
    font-weight: 700;
    line-height: 15px;
    text-align: center;
}
.info-btn {
    margin-left: auto;
    margin-right: 13px;
    padding-right: 8px;
    border-right: 1px solid #dadada;
    height: 26px;
}

/* schematic canvas */
.canvas {
    position: relative;
    flex: 1;
    min-height: 0;
    margin: 0 6px 6px 7px;
    border: 1px solid #bcbcbc;
    background-color: #f0f0d2;
    background-image: linear-gradient(to right, #d8d8d8 2px, transparent 2px), linear-gradient(to bottom, #d8d8d8 2px, transparent 2px);
    background-size: 17.330px 17.330px;
    background-position: 12px 4px;
}
.circuit {
    display: block;
    width: 100%;
    height: 100%;
}
.status {
    position: absolute;
    left: 4px;
    top: 2px;
    display: flex;
    gap: 10.500px;
    color: #84401f;
    font-size: 12.800px;
    font-weight: 700;
    white-space: pre;
}
.status-mcu {
    position: absolute;
    left: 333px;
}

.wire path {
    fill: none;
    stroke: #2c2c3e;
    stroke-width: 3;
    stroke-linecap: round;
    stroke-linejoin: round;
}
.pin {
    fill: none;
    stroke: #000;
    stroke-width: 5;
    stroke-linecap: round;
}
.pin-power {
    stroke: #4d7aa8;
}
.source {
    fill: #ffa800;
    stroke: #000;
    stroke-width: 3;
}
.push-btn {
    fill: #f6f6f6;
    stroke: #d0d0d0;
    stroke-width: 2;
}
.part {
    fill: #fff;
    stroke: #000;
    stroke-width: 3;
}
.relay-arm {
    stroke: #111;
    stroke-width: 4;
    stroke-linecap: round;
}
.coil {
    fill: none;
    stroke: #111;
    stroke-width: 2.500;
}
.chip {
    fill: #141d3c;
    stroke: #000;
    stroke-width: 2;
}
.chip-left text, .chip-right text {
    fill: #f6f6dc;
    font-family: "Noto Sans", sans-serif;
    font-size: 12.500px;
    font-weight: 700;
}
.chip-right text {
    text-anchor: end;
}
.chip-type {
    fill: #666;
    font-family: "Noto Sans", sans-serif;
    font-size: 9.500px;
    letter-spacing: 4.200px;
}
.name {
    fill: #000080;
    font-family: "Open Sans", sans-serif;
    font-size: 20px;
}
.name-wide {
    font-size: 20.800px;
}
.val {
    fill: #800000;
    font-family: "Open Sans", sans-serif;
    font-size: 18.500px;
    word-spacing: 2px;
}
.motor {
    fill: #34465f;
    stroke: #000;
    stroke-width: 3;
}
.motor-tab {
    fill: #34465f;
    stroke: #000;
    stroke-width: 1.500;
}
.led-mark {
    fill: #05054a;
    stroke: #05054a;
    stroke-width: 1.500;
}
.dot circle {
    fill: #1a1a2a;
}

/* windows taskbar */
.taskbar {
    height: 50px;
    flex: none;
    display: flex;
    align-items: stretch;
    background: linear-gradient(to right, #ccd3d6 0, #d7dee1 500px, #cfe6ea 900px, #d2e6e8 1200px, #d9dedd 1400px, #dddfdc 100%);
}
.start {
    width: 61px;
    flex: none;
    display: flex;
    align-items: center;
    justify-content: center;
}
.tb-search {
    width: 429px;
    flex: none;
    display: flex;
    align-items: center;
    margin-bottom: 1px;
    padding-left: 14px;
    background: #fff;
    border: 1px solid #e2e2e2;
    font-family: "Open Sans", sans-serif;
    font-size: 17.800px;
    color: #222;
}
.tb-search span {
    margin-left: 13px;
}
.tb-apps {
    display: flex;
    margin-left: -2px;
}
.tb-app {
    position: relative;
    width: 62px;
    display: flex;
    align-items: center;
    justify-content: center;
}
.tb-nudge svg {
    margin-left: 6px;
}
.tb-open::after {
    content: "";
    position: absolute;
    left: 5px;
    right: 5px;
    bottom: 0;
    height: 3px;
    background: #c8275f;
}
.tb-two::after {
    background: linear-gradient(to right, #c8275f 80%, #e27a9f 80%);
}
.tb-current {
    background: #eff2f2;
}
.tb-current::after {
    left: 0;
    right: 0;
}
.tb-a {
    fill: #fff;
    font-family: "Liberation Sans", sans-serif;
    font-size: 12px;
    font-weight: 700;
    text-anchor: middle;
}
.tb-w {
    fill: #fff;
    font-family: "Liberation Sans", sans-serif;
    font-size: 11px;
    font-weight: 700;
    text-anchor: middle;
}
.tray {
    display: flex;
    align-items: center;
    font-family: "Open Sans", sans-serif;
    color: #111;
}
.tray-battery {
    width: 60px;
    height: 25px;
    margin-left: 95px;
    border: 3px solid #fff;
    background: linear-gradient(to right, #17924c 30%, #000 30%);
    color: #fff;
    font-size: 17px;
    line-height: 19px;
    text-align: center;
}
.tray-weather {
    margin-left: 58px;
}
.tray-temp {
    margin-left: 12px;
    width: 38px;
    font-size: 17px;
    white-space: nowrap;
}
.tray-chev {
    margin-left: 21px;
}
.tray-bat {
    margin-left: 12.500px;
}
.tray-net {
    margin-left: 13.500px;
}
.tray-vol {
    margin-left: 10px;
}
.tray-lang {
    margin-left: 15px;
    width: 29px;
    font-size: 13px;
}
.tray-clock {
    width: 80px;
    margin-left: 14px;
    display: flex;
    flex-direction: column;
    align-items: center;
    gap: 6px;
    font-size: 14.400px;
    line-height: 18px;
}
.tray-notif {
    position: relative;
    margin-left: 21px;
    margin-top: -7px;
}
.notif-badge {
    position: absolute;
    left: 9px;
    top: 10px;
    width: 18px;
    height: 18px;
    border: 1px solid #555;
    border-radius: 50%;
    background: #dfe1df;
    font-size: 12px;
    line-height: 16px;
    text-align: center;
}
```
